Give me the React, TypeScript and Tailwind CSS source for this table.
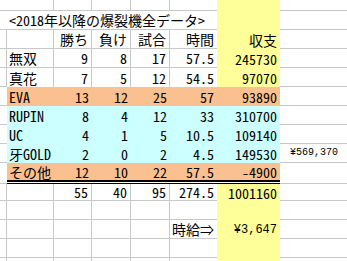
import clsx from 'clsx';

type Fill = 'w' | 'y' | 'o' | 'c';

const data = [
  { name: '無双', v: ['9', '8', '17', '57.5', '245730'], fill: 'w' as Fill },
  { name: '真花', v: ['7', '5', '12', '54.5', '97070'], fill: 'w' as Fill },
  { name: 'EVA', v: ['13', '12', '25', '57', '93890'], fill: 'o' as Fill },
  { name: 'RUPIN', v: ['8', '4', '12', '33', '310700'], fill: 'c' as Fill },
  { name: 'UC', v: ['4', '1', '5', '10.5', '109140'], fill: 'c' as Fill },
  { name: '牙GOLD', v: ['2', '0', '2', '4.5', '149530'], fill: 'c' as Fill },
  { name: 'その他', v: ['12', '10', '22', '57.5', '-4900'], fill: 'o' as Fill },
];

const fillClass: Record<Fill, string> = {
  w: 'bg-white',
  y: 'bg-[#ffff99]',
  o: 'bg-[#fac090]',
  c: 'bg-[#ccffff]',
};

type CellData = { text: string; fill: Fill; right?: boolean; yen?: boolean; small?: boolean };

// build the sheet as a matrix of 15 rows x 8 columns
function buildSheet() {
  const rows: CellData[][] = [];
  const plain = (texts: string[], right = true): CellData[] =>
    Array.from({ length: 8 }, (_, c) => ({
      text: texts[c] ?? '',
      fill: c === 6 ? 'y' : 'w',
      right: right && c > 1,
    }));

  rows.push(plain([]));
  rows.push(plain([]));
  rows.push(plain(['', '', '勝ち', '負け', '試合', '時間', '収支']));
  data.forEach((d) => {
    const row: CellData[] = Array.from({ length: 8 }, (_, c) => ({
      text: c === 1 ? d.name : c >= 2 && c <= 6 ? d.v[c - 2] : '',
      fill: c === 0 || c === 7 ? 'w' : d.fill === 'w' ? (c === 6 ? 'y' : 'w') : d.fill,
      right: c > 1,
    }));
    if (d.name === '牙GOLD') row[7] = { text: '¥569,370', fill: 'w', right: true, yen: true, small: true };
    rows.push(row);
  });
  rows.push(plain(['', '', '55', '40', '95', '274.5', '1001160']));
  rows.push(plain([]));
  const pay = plain(['', '', '', '', '', '時給⇒', '¥3,647']);
  pay[6].yen = true;
  rows.push(pay);
  rows.push(plain([]));
  rows.push(plain([]));
  return rows;
}

const heights = ['h-[11px]', 'h-[19px]', 'h-[19px]', 'h-[19px]', 'h-[19px]', 'h-[19px]', 'h-[19px]', 'h-[19px]', 'h-[19px]', 'h-[21px]', 'h-[17px]', 'h-[19px]', 'h-[19px]', 'h-[19px]', 'h-[19px]'];

export default function App() {
  const sheet = buildSheet();
  const isWhite = (r: number, c: number) => r < sheet.length && c < 8 && sheet[r][c].fill === 'w';

  return (
    <div className="w-[347px] h-[261px] overflow-hidden bg-white text-black font-['Noto_Sans_Mono_CJK_JP','Noto_Sans_CJK_JP',sans-serif] text-[14px]">
      <div className="grid grid-cols-[7px_47px_38px_39px_39px_47px_63px_1fr]">
        {sheet.map((row, r) => {
          const h = heights[r];
          if (r === 1) {
            return [
              <div key="1-0" className={clsx(h, 'border-b border-[#c8c8c8]')} />,
              <div key="1-1" className={clsx(h, 'col-span-5 flex items-center pl-[2px] whitespace-nowrap border-b border-[#c8c8c8]')}>
                &lt;2018年以降の爆裂機全データ&gt;
              </div>,
              <div key="1-6" className={clsx(h, fillClass.y)} />,
              <div key="1-7" className={clsx(h, 'border-b border-[#c8c8c8]')} />,
            ];
          }
          return row.map((cell, c) => {
            const white = cell.fill === 'w';
            const doubled = r === 9 && c >= 1 && c <= 6;
            const borderR = white && isWhite(r, c + 1) && !(r === 0 && c === 0) && c < 7;
            const borderB = white && isWhite(r + 1, c) && !doubled;
            return (
              <div
                key={`${r}-${c}`}
                className={clsx(
                  h,
                  'flex flex-col whitespace-nowrap',
                  fillClass[cell.fill],
                  borderR && 'border-r border-[#c8c8c8]',
                  borderB && 'border-b border-[#c8c8c8]',
                )}
              >
                <div
                  className={clsx(
                    'flex-1 min-h-0 flex items-center leading-none',
                    cell.right ? (cell.small ? 'justify-end pr-[9px]' : 'justify-end pr-[3px]') : 'pl-[2px]',
                    cell.yen && "font-['Liberation_Mono',monospace]",
                    cell.yen && (cell.small ? 'text-[10px]' : 'text-[12px]'),
                  )}
                >
                  {cell.text}
                </div>
                {doubled && (
                  <>
                    <div className="h-[2px] shrink-0 bg-black" />
                    <div className="h-px shrink-0 bg-white" />
                    <div className="h-px shrink-0 bg-black" />
                  </>
                )}
              </div>
            );
          });
        })}
      </div>
    </div>
  );
}
